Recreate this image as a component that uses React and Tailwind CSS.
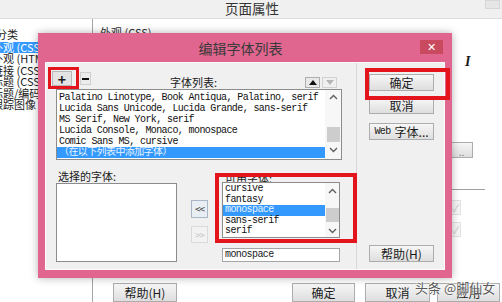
import React from "react";

const ui = "font-['Noto_Sans_CJK_SC','Liberation_Sans',sans-serif]";
const mono = "font-['Liberation_Mono','Noto_Sans_CJK_SC',monospace]";

const fontGroups = [
  "Palatino Linotype, Book Antiqua, Palatino, serif",
  "Lucida Sans Unicode, Lucida Grande, sans-serif",
  "MS Serif, New York, serif",
  "Lucida Console, Monaco, monospace",
  "Comic Sans MS, cursive",
  "（在以下列表中添加字体）",
];

const genericFonts = ["cursive", "fantasy", "monospace", "sans-serif", "serif"];

const categories = ["外观 (CSS)", "外观 (HTML)", "链接 (CSS)", "标题 (CSS)", "标题/编码", "跟踪图像"];

const Chevron = ({ up }) => (
  <svg width="9" height="6" viewBox="0 0 9 6" fill="none">
    <path d={up ? "M1 5L4.5 1.5L8 5" : "M1 1L4.5 4.5L8 1"} stroke="#5f5f5f" strokeWidth="1.4" />
  </svg>
);

const WinButton = ({ children, className = "" }) => (
  <div
    className={`flex items-center justify-center border border-[#adadad] bg-linear-to-b from-[#f6f6f6] to-[#dedede] text-[12px] leading-none text-[#1a1a1a] ${className}`}
  >
    {children}
  </div>
);

const App = () => {
  return (
    <div className={`relative h-[302px] w-[502px] overflow-hidden bg-white text-[#1a1a1a] ${ui}`}>
      {/* page properties window behind */}
      <div className="flex h-[19px] items-start border-b border-[#dcdcdc] bg-[#f0f0f0]">
        <div className="flex-1" />
        <span className="mt-[1px] pl-[4px] text-[13.5px] leading-[15px] text-[#333]">页面属性</span>
        <div className="flex flex-1 justify-end pr-[2px]">
          <div className="h-[9px] w-[15px] border border-[#d6d6d6] bg-[#e6e6e6]" />
        </div>
      </div>

      <div className="flex h-[283px]">
        <div className="flex w-[93px] flex-col overflow-hidden border-r border-[#a5a5a5]">
          <div className="-ml-[4px] mt-[9px] text-[11px] leading-[12px]">分类</div>
          <div className="mt-[2px] flex flex-col">
            {categories.map((c, i) => (
              <div
                key={i}
                className={`h-[11.4px] whitespace-nowrap pl-0 text-[11px] leading-[11.4px] ${
                  i === 0 ? "bg-[#3399ff] text-white" : ""
                }`}
              >
                <span className="-ml-[8px] inline-block">{c}</span>
              </div>
            ))}
          </div>
        </div>

        <div className="flex flex-1 flex-col">
          <div className="flex flex-1">
            <div className="flex-1">
              <div className="ml-[7px] mt-[7px] text-[11px] leading-[12px] text-[#333]">外观 (CSS)</div>
            </div>
            <div className="flex w-[57px] flex-col">
              <div className="ml-[20px] mt-[37px] h-[12px] font-['Liberation_Serif',serif] text-[14px] font-bold italic leading-[12px]">
                I
              </div>
              <WinButton className="-ml-[3px] mt-[74px] h-[16px] w-[31px] text-[#777]">
                <span className="pl-[8px] pt-[4px] text-[10px]">..</span>
              </WinButton>
              <div className="mt-[31px] h-[1px] w-[40px] bg-[#a0a0a0]" />
              <div className="mt-[10px] flex h-[15px] w-[16px] items-center justify-end border border-[#e2e2e2] bg-[#f7f7f7] pr-[1px] text-[10px] text-[#c8c8c8]">
                ✓
              </div>
              <div className="mt-[7px] flex h-[15px] w-[16px] items-center justify-end border border-[#e2e2e2] bg-[#f7f7f7] pr-[1px] text-[10px] text-[#c8c8c8]">
                ✓
              </div>
            </div>
          </div>
          <div className="flex h-[20px] items-start pt-[1px]">
            <WinButton className="ml-[20px] h-[19px] w-[64px]">帮助(H)</WinButton>
            <WinButton className="ml-[115px] h-[19px] w-[63px]">确定</WinButton>
            <WinButton className="ml-[10px] h-[19px] w-[65px]">取消</WinButton>
            <WinButton className="ml-[7px] h-[19px] w-[63px]">应用</WinButton>
          </div>
        </div>
      </div>

      {/* edit font list dialog */}
      <div className="absolute left-[38px] top-[33px] flex h-[245px] w-[414px] flex-col bg-[#e1668f] shadow-[0_0_8px_rgba(0,0,0,0.3)]">
        <div className="flex h-[29px] items-center">
          <div className="flex-1" />
          <span className="text-[14px] leading-[16px] text-[#3a3a3a]">编辑字体列表</span>
          <div className="flex flex-1 justify-end pr-[9px]">
            <div className="mb-[2px] flex h-[14px] w-[23px] items-center justify-center bg-[#c9495f] text-[11px] leading-none text-white">
              ✕
            </div>
          </div>
        </div>

        <div className="mx-[7px] mb-[8px] flex flex-1 border border-[#fafafa] bg-[#f0f0f0]">
          <div className="flex w-[310px] flex-col">
            <div className="flex h-[26px] items-start">
              <div className="ml-[6px] mt-[8px] flex h-[15px] w-[20px] items-center justify-center border border-[#b8b8b8] bg-[#e4e4e4] text-[14px] font-bold leading-none">
                +
              </div>
              <div className="ml-[8px] mt-[9px] flex h-[13px] w-[11px] items-center justify-center border border-[#d0d0d0] bg-[#ececec]">
                <div className="h-[2px] w-[7px] bg-[#111]" />
              </div>
              <div className="ml-[79px] mt-[13px] text-[11px] leading-[12px]">字体列表:</div>
              <div className="flex-1" />
              <div className="mt-[14px] flex h-[11px] w-[15px] items-center justify-center border border-[#adadad] bg-[#e8e8e8]">
                <svg width="8" height="5" viewBox="0 0 8 5">
                  <path d="M0 5L4 0L8 5Z" fill="#111" />
                </svg>
              </div>
              <div className="ml-[2px] mr-[19px] mt-[14px] flex h-[11px] w-[15px] items-center justify-center border border-[#d2d2d2] bg-[#efefef]">
                <svg width="8" height="5" viewBox="0 0 8 5">
                  <path d="M0 0L8 0L4 5Z" fill="#b5b5b5" />
                </svg>
              </div>
            </div>

            <div className="ml-[10px] flex h-[71px] w-[286px] border border-[#8c8c8c] bg-white">
              <div className={`flex w-[268px] flex-col pt-[2px] ${mono}`}>
                {fontGroups.map((f, i) => (
                  <div
                    key={i}
                    className={`h-[11px] whitespace-nowrap pl-[2px] text-[10px] leading-[11px] tracking-[-0.6px] ${
                      i === fontGroups.length - 1 ? "bg-[#3399ff] text-[#eaf4ff]" : "text-[#111]"
                    }`}
                  >
                    {f}
                  </div>
                ))}
              </div>
              <div className="flex flex-1 flex-col items-center bg-[#f7f7f7]">
                <div className="mt-[4px] flex h-[6px]">
                  <Chevron up />
                </div>
                <div className="mt-[27px] h-[15px] w-[13px] bg-[#cdcdcd]" />
                <div className="mt-[5px] flex h-[6px]">
                  <Chevron />
                </div>
              </div>
            </div>

            <div className="flex flex-1 items-start">
              <div className="ml-[10px] flex w-[121px] flex-col">
                <div className="mt-[10px] pl-[2px] text-[11px] leading-[13px]">选择的字体:</div>
                <div className="h-[79px] border border-[#8c8c8c] bg-white" />
              </div>

              <div className="ml-[14px] flex w-[17px] flex-col">
                <div className="mt-[40px] flex h-[18px] items-center justify-center border border-[#a9b6c6] bg-[#e9eef4] text-[10px] leading-none tracking-[-1px] text-[#333]">
                  &lt;&lt;
                </div>
                <div className="mt-[8px] flex h-[17px] items-center justify-center border border-[#dadada] bg-[#f2f2f2] text-[10px] leading-none tracking-[-1px] text-[#c4c4c4]">
                  &gt;&gt;
                </div>
              </div>

              <div className="ml-[14px] flex w-[118px] flex-col">
                <div className="mt-[13px] h-[9px] pl-[3px] text-[11px] leading-[10px]">可用字体:</div>
                <div className="flex h-[56px] border border-[#8c8c8c] bg-white">
                  <div className={`flex w-[102px] flex-col pt-[1px] ${mono}`}>
                    {genericFonts.map((f, i) => (
                      <div
                        key={i}
                        className={`h-[10.5px] whitespace-nowrap pl-[2px] text-[10px] leading-[10.5px] tracking-[-0.6px] ${
                          f === "monospace" ? "bg-[#3399ff] text-[#eaf4ff]" : "text-[#111]"
                        }`}
                      >
                        {f}
                      </div>
                    ))}
                  </div>
                  <div className="flex flex-1 flex-col items-center bg-[#f7f7f7]">
                    <div className="mt-[5px] flex h-[6px]">
                      <Chevron up />
                    </div>
                    <div className="mt-[14px] h-[14px] w-[13px] bg-[#cdcdcd]" />
                    <div className="mt-[6px] flex h-[6px]">
                      <Chevron />
                    </div>
                  </div>
                </div>
                <div
                  className={`mt-[10px] flex h-[14px] items-center border border-[#a5a5a5] bg-white pl-[2px] text-[10px] leading-none tracking-[-0.6px] ${mono}`}
                >
                  monospace
                </div>
              </div>
            </div>
          </div>

          <div className="flex flex-1 flex-col border-l border-[#d8d8d8]">
            <WinButton className="ml-[12px] mt-[11px] h-[17px] w-[65px]">确定</WinButton>
            <WinButton className="ml-[12px] mt-[7px] h-[16px] w-[65px]">取消</WinButton>
            <WinButton className="ml-[12px] mt-[9px] h-[17px] w-[65px]">
              <span className={`${mono} text-[10px] tracking-[-0.6px]`}>Web</span>
              <span className="ml-[4px]">字体...</span>
            </WinButton>
            <div className="flex-1" />
            <WinButton className="mb-[7px] ml-[12px] h-[17px] w-[65px]">帮助(H)</WinButton>
          </div>
        </div>

        {/* red annotation frames */}
        <div className="pointer-events-none absolute left-[10px] top-[34px] h-[22px] w-[31px] border-[3px] border-[#e3141c]" />
        <div className="pointer-events-none absolute left-[327px] top-[35px] h-[32px] w-[85px] border-[4px] border-[#e3141c]" />
        <div className="pointer-events-none absolute left-[177px] top-[140px] h-[70px] w-[142px] border-[4px] border-[#e3141c]" />
      </div>

      {/* watermark */}
      <div className="absolute left-[415px] top-[280px] whitespace-nowrap text-[13px] leading-[16px] text-[#5a5a5a] [text-shadow:0_0_2px_#fff,0_0_2px_#fff]">
        头条 @脚仙女
      </div>
    </div>
  );
};

export default App;
